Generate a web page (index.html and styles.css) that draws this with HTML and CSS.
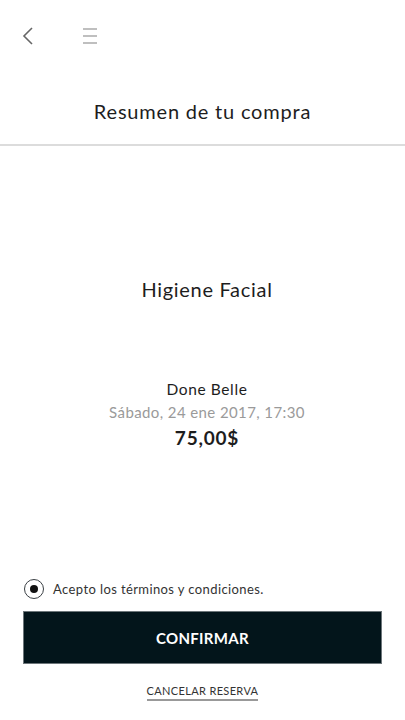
FILE: index.html
```html
<!DOCTYPE html>
<html lang="es">
<head>
    <meta charset="UTF-8">
    <meta name="viewport" content="width=device-width, initial-scale=1.0">
    <title>Resumen de tu compra</title>
    <link rel="stylesheet" href="styles.css">
</head>
<body>
    <div class="screen">
        <div class="top-bar">
            <button class="icon-btn back-btn">
                <svg width="12" height="20" viewBox="0 0 12 20"><path d="M10 2 L2 10 L10 18" fill="none" stroke="#666" stroke-width="1.6"/></svg>
            </button>
            <button class="icon-btn menu-btn">
                <svg width="16" height="20" viewBox="0 0 16 20"><path d="M1 3 H15 M1 10 H15 M1 17 H15" fill="none" stroke="#aaa" stroke-width="1.6"/></svg>
            </button>
        </div>

        <h1 class="page-title">Resumen de tu compra</h1>

        <div class="summary">
            <h2 class="service-name">Higiene Facial</h2>
            <div class="details">
                <div class="provider">Done Belle</div>
                <div class="date">Sábado, 24 ene 2017, 17:30</div>
                <div class="price">75,00$</div>
            </div>
        </div>

        <div class="actions">
            <label class="terms">
                <span class="radio"><span class="radio-dot"></span></span>
                <span class="terms-text">Acepto los términos y condiciones.</span>
            </label>
            <button class="btn-confirm">CONFIRMAR</button>
            <a class="cancel-link" href="#">CANCELAR RESERVA</a>
        </div>
    </div>
</body>
</html>
```

FILE: styles.css
```css
:root {
    --text-color: #1d1d1d;
    --muted-color: #9a9a9a;
    --dark-color: #03151b;
    --line-color: #dcdcdc;
}

* {
    margin: 0;
    padding: 0;
    box-sizing: border-box;
    font-family: 'Lato', 'Open Sans', sans-serif;
}

body {
    background: #ffffff;
    color: var(--text-color);
}

.screen {
    width: 405px;
    height: 720px;
    display: flex;
    flex-direction: column;
}

.top-bar {
    display: flex;
    align-items: center;
    height: 72px;
    padding: 0 0 0 18px;
    gap: 42px;
}

.icon-btn {
    background: none;
    border: none;
    display: flex;
    align-items: center;
    justify-content: center;
    padding: 0;
    width: 20px;
    height: 30px;
    cursor: pointer;
}

.page-title {
    font-size: 20px;
    font-weight: 400;
    letter-spacing: 0.8px;
    text-align: center;
    height: 74px;
    padding-top: 27px;
    border-bottom: 2px solid var(--line-color);
}

.summary {
    flex: 1;
    display: flex;
    flex-direction: column;
    align-items: center;
    padding: 131px 0 0 9px;
}

.service-name {
    font-size: 20px;
    font-weight: 400;
    letter-spacing: 0.7px;
}

.details {
    margin-top: 77px;
    text-align: center;
}

.provider {
    font-size: 15.5px;
    letter-spacing: 0.6px;
    line-height: 23px;
}

.date {
    font-size: 15px;
    letter-spacing: 0.4px;
    line-height: 23px;
    color: var(--muted-color);
}

.price {
    font-size: 19px;
    font-weight: 700;
    letter-spacing: 0.8px;
    line-height: 28px;
}

.actions {
    display: flex;
    flex-direction: column;
    align-items: center;
    padding: 0 23px 19px;
}

.terms {
    align-self: flex-start;
    display: flex;
    align-items: center;
    gap: 9px;
    margin-left: 1px;
}

.radio {
    width: 20px;
    height: 20px;
    border: 1.6px solid #3a3f44;
    border-radius: 50%;
    display: flex;
    align-items: center;
    justify-content: center;
}

.radio-dot {
    width: 8px;
    height: 8px;
    border-radius: 50%;
    background: #111;
}

.terms-text {
    font-size: 13px;
    letter-spacing: 0.4px;
    color: #333;
}

.btn-confirm {
    margin-top: 12px;
    width: 100%;
    height: 53px;
    background: var(--dark-color);
    color: #fff;
    border: 1px solid #6d767a;
    font-size: 15px;
    font-weight: 700;
    letter-spacing: 0.3px;
    cursor: pointer;
}

.cancel-link {
    margin-top: 20px;
    font-size: 11px;
    letter-spacing: 0.35px;
    color: #333;
    text-decoration: none;
    border-bottom: 2px solid #999;
    padding-bottom: 2px;
}
```
